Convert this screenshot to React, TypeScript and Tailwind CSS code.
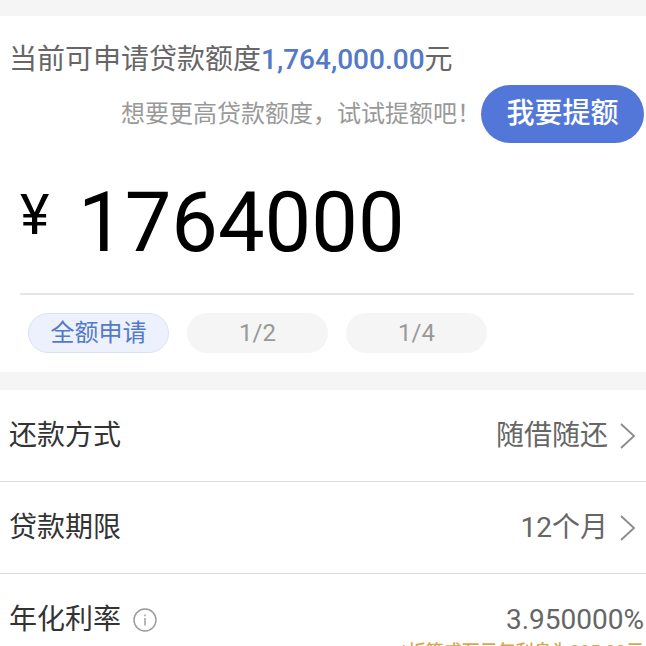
import React, { useState } from "react";

interface RowProps {
  label: string;
  value: string;
}

const portions = ["全额申请", "1/2", "1/4"];

function Chevron() {
  return (
    <svg className="h-7 w-4 shrink-0" viewBox="0 0 16 28" fill="none" stroke="#8a8a8a" strokeWidth="1.8" aria-hidden="true">
      <path d="M1 2 L14 14 L1 26" />
    </svg>
  );
}

function InfoIcon() {
  return (
    <svg className="h-6 w-6" viewBox="0 0 24 24" fill="none" stroke="#999999" strokeWidth="1.4" aria-hidden="true">
      <circle cx="12" cy="12" r="11" />
      <path d="M12 10 V17.5 M12 6.5 V8.2" />
    </svg>
  );
}

function SelectRow({ label, value }: RowProps) {
  return (
    <button type="button" className="flex h-[92px] w-full items-center border-b border-[#dcdcdc] pr-2.5 pl-[9px] text-left">
      <span className="flex-1 text-[#333333]">{label}</span>
      <span className="mr-3 text-[#666666]">{value}</span>
      <Chevron />
    </button>
  );
}

export default function App() {
  const [portion, setPortion] = useState(portions[0]);
  const [amount, setAmount] = useState("1764000");

  return (
    <main className="h-screen overflow-hidden bg-white font-['Roboto','Noto_Sans_CJK_SC',sans-serif] text-[28px] leading-10">
      <div className="h-4 bg-[#f5f5f5]" />

      <section className="pt-6">
        <p className="px-[9px] text-[#666666]">
          当前可申请贷款额度<span className="font-medium text-[#5379c8]">1,764,000.00</span>元
        </p>

        <div className="mt-[5px] flex items-center justify-end pr-0.5">
          <span className="text-2xl text-[#999999]">想要更高贷款额度，试试提额吧！</span>
          <button type="button" className="h-[58px] w-[163px] shrink-0 rounded-full bg-[#5277d9] font-medium text-white">
            我要提额
          </button>
        </div>

        <div className="mr-3 ml-5 flex h-[152px] items-start border-b-2 border-[#e5e5e5] pt-8 text-black">
          <label htmlFor="amount" className="w-[58px] pt-2 text-[56px] leading-16">¥</label>
          <input
            id="amount"
            className="min-w-0 flex-1 bg-transparent text-[83px] leading-24 outline-none"
            inputMode="numeric"
            value={amount}
            onChange={(e) => setAmount(e.target.value)}
          />
        </div>

        <div className="flex gap-[18px] px-7 pt-[18px] pb-[19px] text-2xl">
          {portions.map((item) => (
            <button
              key={item}
              type="button"
              onClick={() => setPortion(item)}
              className={`flex h-10 w-[141px] items-center justify-center rounded-full ${
                item === portion ? "border border-[#dbe3f2] bg-[#edf1fd] text-[#5379c8]" : "bg-[#f5f5f5] text-[#999999]"
              }`}
            >
              {item}
            </button>
          ))}
        </div>
      </section>

      <div className="h-[18px] bg-[#f5f5f5]" />

      <section>
        <SelectRow label="还款方式" value="随借随还" />
        <SelectRow label="贷款期限" value="12个月" />
        <div className="pt-[26px] pr-0.5 pl-[9px]">
          <div className="flex items-center">
            <span className="text-[#333333]">年化利率</span>
            <button type="button" className="ml-3" aria-label="年化利率说明">
              <InfoIcon />
            </button>
            <span className="flex-1 text-right text-[#666666]">3.950000%</span>
          </div>
          <p className="text-right text-lg/6 font-medium text-[#d8a94a]">*折算成万元年利息为395.00元</p>
        </div>
      </section>
    </main>
  );
}
